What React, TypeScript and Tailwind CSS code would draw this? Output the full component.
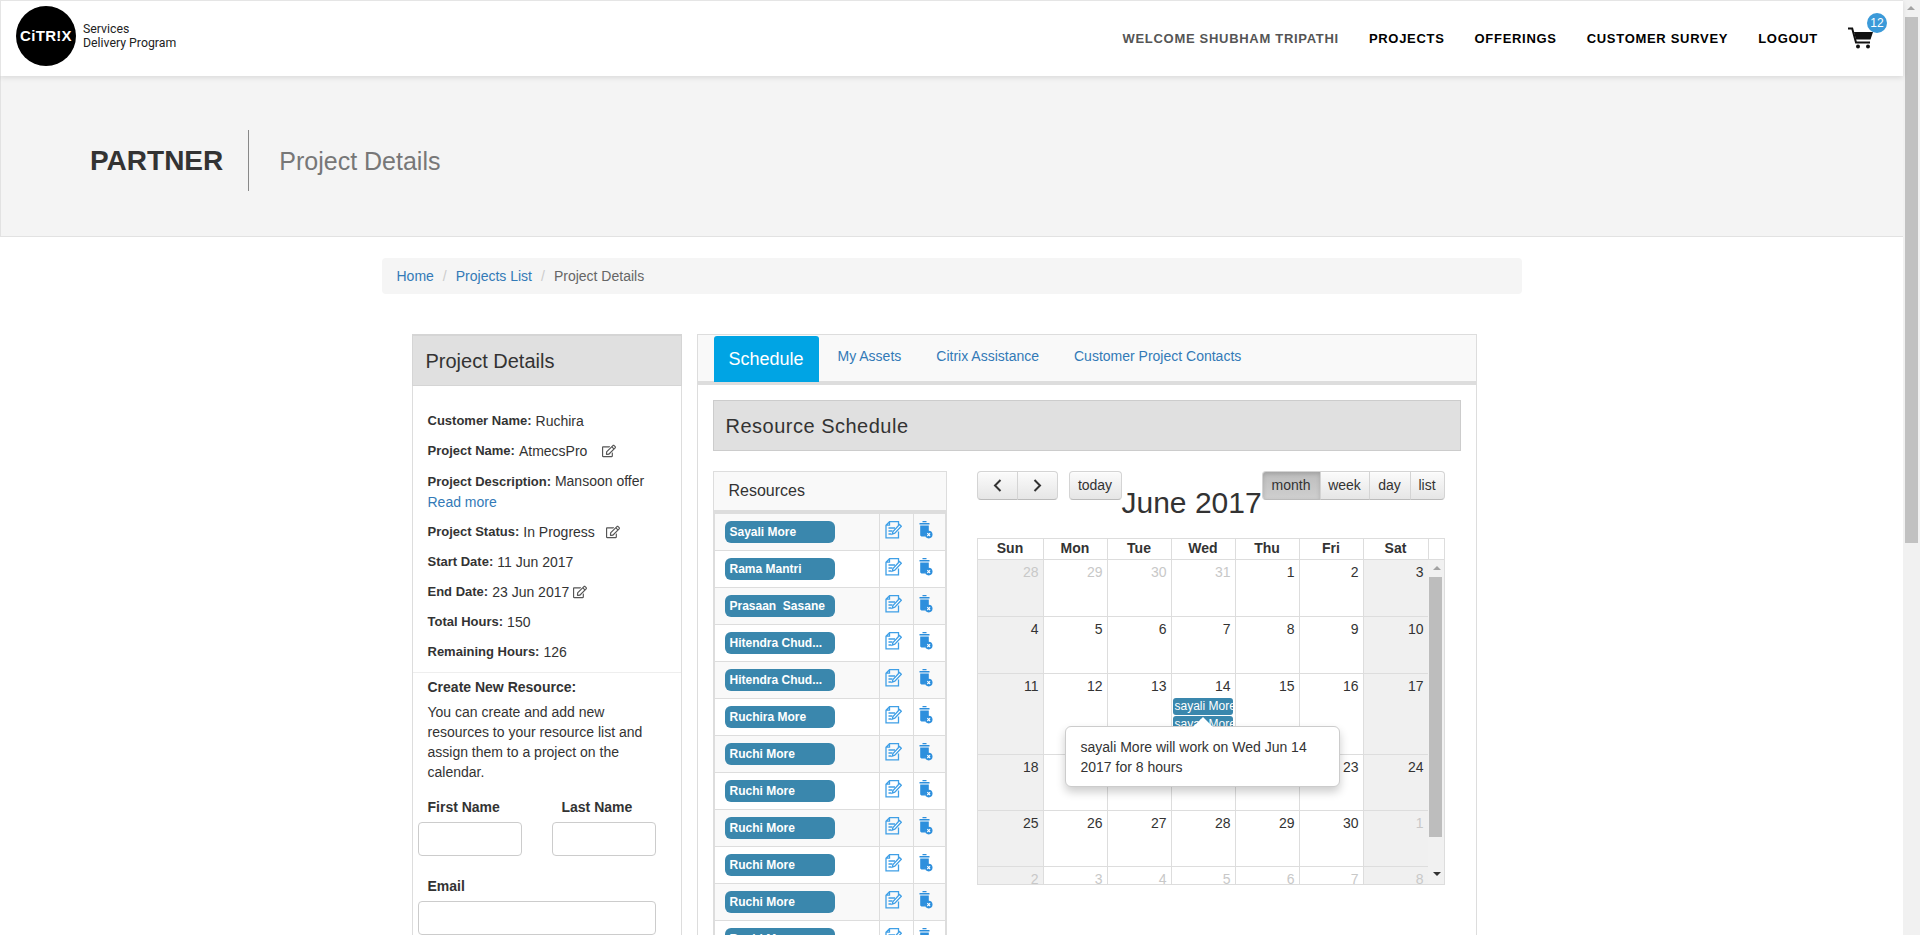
import React from 'react';
import { FaRegEdit } from 'react-icons/fa';

const RESOURCES = [
  'Sayali More',
  'Rama Mantri',
  'Prasaan  Sasane',
  'Hitendra Chud...',
  'Hitendra Chud...',
  'Ruchira More',
  'Ruchi More',
  'Ruchi More',
  'Ruchi More',
  'Ruchi More',
  'Ruchi More',
  'Ruchi More',
];

const WEEK_DAYS = ['Sun', 'Mon', 'Tue', 'Wed', 'Thu', 'Fri', 'Sat'];

const WEEKS = [
  { height: 'h-[57px]', days: [[28, 1], [29, 1], [30, 1], [31, 1], [1, 0], [2, 0], [3, 0]] },
  { height: 'h-[57px]', days: [[4, 0], [5, 0], [6, 0], [7, 0], [8, 0], [9, 0], [10, 0]] },
  { height: 'h-[81px]', days: [[11, 0], [12, 0], [13, 0], [14, 0], [15, 0], [16, 0], [17, 0]] },
  { height: 'h-[56px]', days: [[18, 0], [19, 0], [20, 0], [21, 0], [22, 0], [23, 0], [24, 0]] },
  { height: 'h-[56px]', days: [[25, 0], [26, 0], [27, 0], [28, 0], [29, 0], [30, 0], [1, 1]] },
  { height: 'h-[56px]', days: [[2, 1], [3, 1], [4, 1], [5, 1], [6, 1], [7, 1], [8, 1]] },
];

const NoteIcon = () => (
  <svg width="17" height="18" viewBox="0 0 17 18" fill="none" stroke="#3f9fe6" strokeWidth="1.3">
    <path d="M4.5 .7H13.5V4.5M13.5 10.5V16.8H1V4.2L4.5 .7V4.2H1" />
    <path d="M3.5 7H10M3.5 10H7.5M3.5 13H6" />
    <path d="M7 13.2L8 10.5L14.5 3.5L16.3 5.2L9.8 12.2Z" fill="#fff" />
  </svg>
);

const TrashIcon = () => (
  <svg width="14" height="18" viewBox="0 0 14 18">
    <path d="M3.5 1.2H7.5V0H3.5ZM.5 2H10.5V3.6H.5ZM1.2 4.5H9.8V10.5A4 4 0 0 0 6 15.5H2.4L1.2 14.5Z" fill="#2d8fdd" />
    <circle cx="9.7" cy="13.6" r="3.8" fill="#2d8fdd" />
    <path d="M8.3 12.2L11.1 15M11.1 12.2L8.3 15" stroke="#fff" strokeWidth="1.1" />
  </svg>
);

const Cart = () => (
  <svg width="26" height="22" viewBox="0 0 26 22">
    <path d="M0 1.5H4.2L8 15.5H22" fill="none" stroke="#111" strokeWidth="2" />
    <path d="M6 5H25L22.5 12.5H8Z" fill="#111" />
    <circle cx="10" cy="19.5" r="2" fill="#111" />
    <circle cx="20" cy="19.5" r="2" fill="#111" />
  </svg>
);

const Chevron = ({ left }: { left?: boolean }) => (
  <svg width="9" height="13" viewBox="0 0 9 13" fill="none" stroke="#333" strokeWidth="2">
    <path d={left ? 'M7.5 1L2 6.5L7.5 12' : 'M1.5 1L7 6.5L1.5 12'} />
  </svg>
);

const Detail = ({ label, value, icon }: { label: string; value: string; icon?: string }) => (
  <p className="mb-[10px] h-[20px] leading-[20px] whitespace-nowrap flex items-center">
    <b className="text-[13px] mr-[4px]">{label}</b> {value}
    {icon && <FaRegEdit className={`${icon} text-[14px] text-[#555]`} />}
  </p>
);

const btn = 'h-[29px] flex items-center justify-center bg-linear-to-b from-[#fbfbfb] to-[#e6e6e6] border border-[#d4d4d4] border-b-[#bbb] text-[14px] text-[#333] shadow-[inset_0_1px_0_rgba(255,255,255,0.6)]';

export default function App() {
  return (
    <div className="flex h-[935px] overflow-hidden bg-white text-[14px] text-[#333] font-['Liberation_Sans',Arial,sans-serif]">
      <div className="w-[1903px] shrink-0">
        {/* Top nav */}
        <header className="relative z-10 h-[76px] flex items-start justify-between bg-white border-t border-l border-[#e5e5e5] pl-[15px] pr-[30px] shadow-[0_2px_5px_rgba(0,0,0,0.1)]">
          <div className="flex items-center gap-[7px] pt-[5px]">
            <div aria-label="Citrix" className="w-[60px] h-[60px] rounded-full bg-black flex items-center justify-center text-white font-bold text-[15px] tracking-[0.3px]">
              CiTR!X
            </div>
            <div className="font-['Roboto',sans-serif] text-[12.3px] leading-[14px] text-[#222] -mt-[1px]">
              <div>Services</div>
              <div>Delivery Program</div>
            </div>
          </div>
          <nav className="h-[75px] flex items-center gap-[30px] text-[13px] font-bold tracking-[0.7px] text-black">
            <span className="text-[#555]">WELCOME SHUBHAM TRIPATHI</span>
            <span>PROJECTS</span>
            <span>OFFERINGS</span>
            <span>CUSTOMER SURVEY</span>
            <span>LOGOUT</span>
            <div className="relative w-[25px] h-[22px] -mt-[1px]">
              <Cart />
              <span className="absolute -top-[14px] left-[19px] w-[20px] h-[20px] rounded-full bg-[#3b9ad9] text-white text-[12px] font-normal tracking-normal flex items-center justify-center">
                12
              </span>
            </div>
          </nav>
        </header>

        {/* Title band */}
        <div className="h-[161px] bg-[#f4f4f4] border-l border-b border-[#e2e2e2] pl-[89px] pt-[9px] flex items-center">
          <div className="text-[28px] font-bold text-[#333] leading-none">PARTNER</div>
          <div className="w-px h-[61px] bg-[#888] ml-[25px] mr-[30px]" />
          <div className="text-[25px] text-[#777] leading-none pt-[2px]">Project Details</div>
        </div>

        <div className="w-[1140px] mx-auto pt-[21px]">
          <div className="h-[36px] px-[15px] flex items-center gap-[9px] rounded bg-[#f5f5f5]">
            <span className="text-[#337ab7]">Home</span>
            <span className="text-[#ccc]">/</span>
            <span className="text-[#337ab7]">Projects List</span>
            <span className="text-[#ccc]">/</span>
            <span className="text-[#666]">Project Details</span>
          </div>

          <div className="flex gap-[15px] pl-[30px] pt-[40px]">
            {/* Project details column */}
            <aside className="w-[270px] shrink-0 border-x border-[#ddd] h-[640px]">
              <div className="h-[52px] -mx-px flex items-center pl-[13px] bg-[#e0e0e0] border border-t-2 border-[#d5d5d5] text-[20px]">
                Project Details
              </div>
              <div className="pt-[25px] pl-[15px] pr-[10px]">
                <Detail label="Customer Name:" value="Ruchira" />
                <Detail label="Project Name:" value="AtmecsPro" icon="ml-[15px]" />
                <p className="mb-[10px] leading-[20px]">
                  <b className="text-[13px]">Project Description:</b> Mansoon offer
                  <br />
                  <span className="text-[#337ab7]">Read more</span>
                </p>
                <Detail label="Project Status:" value="In Progress" icon="ml-[11px]" />
                <Detail label="Start Date:" value="11 Jun 2017" />
                <Detail label="End Date:" value="23 Jun 2017" icon="ml-[4px]" />
                <Detail label="Total Hours:" value="150" />
                <Detail label="Remaining Hours:" value="126" />
              </div>
              <div className="border-t border-[#eee] mt-[1px] pl-[15px] pr-[15px] pt-[4px]">
                <h4 className="font-bold leading-[20px]">Create New Resource:</h4>
                <p className="mt-[5px] leading-[20px]">
                  You can create and add new resources to your resource list and assign them to a project on the calendar.
                </p>
                <div className="mt-[15px] flex gap-[30px] -ml-[10px]">
                  <div className="w-[104px]">
                    <label className="block pl-[10px] font-bold leading-[20px]">First Name</label>
                    <div className="mt-[5px] h-[34px] rounded border border-[#ccc] bg-white" />
                  </div>
                  <div className="w-[104px]">
                    <label className="block pl-[10px] font-bold leading-[20px]">Last Name</label>
                    <div className="mt-[5px] h-[34px] rounded border border-[#ccc] bg-white" />
                  </div>
                </div>
                <div className="mt-[20px] -ml-[10px] w-[238px]">
                  <label className="block pl-[10px] font-bold leading-[20px]">Email</label>
                  <div className="mt-[5px] h-[34px] rounded border border-[#ccc] bg-white" />
                </div>
              </div>
            </aside>

            {/* Tabs column */}
            <section className="w-[780px] shrink-0 border-x border-t border-[#ddd] h-[640px]">
              <div className="h-[50px] bg-[#f9f9f9] border-b-4 border-[#ddd] flex items-start pl-[16px]">
                <div className="mt-px h-[46px] w-[105px] rounded-t-[3px] bg-[#00a4e4] text-white text-[18px] flex items-center justify-center">
                  Schedule
                </div>
                <div className="flex gap-[35px] ml-[19px] mt-[11px] text-[#337ab7] leading-[20px]">
                  <span>My Assets</span>
                  <span>Citrix Assistance</span>
                  <span>Customer Project Contacts</span>
                </div>
              </div>

              <div className="px-[15px] pt-[15px]">
                <div className="h-[51px] flex items-center pl-[12px] bg-[#e0e0e0] border border-[#ccc] text-[20px] tracking-[0.5px]">
                  Resource Schedule
                </div>

                <div className="flex gap-[30px] pt-[20px]">
                  {/* Resources table */}
                  <div className="w-[234px] shrink-0">
                    <div className="h-[39px] flex items-center pl-[15px] bg-[#f9f9f9] border border-[#ddd] border-b-0 text-[16px]">
                      Resources
                    </div>
                    <div className="border-x-2 border-t-4 border-[#ddd]">
                      {RESOURCES.map((name, i) => (
                        <div key={i} className={`h-[37px] flex border-b border-[#ddd] ${i % 2 === 0 ? 'bg-[#f9f9f9]' : 'bg-white'}`}>
                          <div className="w-[165px] pl-[10px] pt-[7px] border-r border-[#ddd]">
                            <div className="w-[110px] h-[22px] pl-[5px] rounded-[6px] bg-[#3a87ad] text-white text-[12px] font-bold leading-[22px] whitespace-pre">
                              {name}
                            </div>
                          </div>
                          <div className="w-[34px] pl-[5px] pt-[7px] border-r border-[#ddd]">
                            <NoteIcon />
                          </div>
                          <div className="pl-[5px] pt-[7px]">
                            <TrashIcon />
                          </div>
                        </div>
                      ))}
                    </div>
                  </div>

                  {/* Calendar */}
                  <div className="w-[468px] shrink-0">
                    <div className="h-[67px] flex items-start">
                      <div className="flex">
                        <div className={`${btn} w-[41px] rounded-l-[4px]`}><Chevron left /></div>
                        <div className={`${btn} w-[41px] -ml-px rounded-r-[4px]`}><Chevron /></div>
                        <div className={`${btn} w-[53px] ml-[11px] rounded-[4px]`}>today</div>
                      </div>
                      <div className="w-[140px] mt-[15px] text-[30px] leading-[33px] whitespace-nowrap">June 2017</div>
                      <div className="flex">
                        <div className={`${btn} w-[59px] rounded-l-[4px] from-[#bdbdbd]! to-[#cfcfcf]! shadow-[inset_0_2px_4px_rgba(0,0,0,0.15)]`}>month</div>
                        <div className={`${btn} w-[50px] -ml-px`}>week</div>
                        <div className={`${btn} w-[42px] -ml-px`}>day</div>
                        <div className={`${btn} w-[35px] -ml-px rounded-r-[4px]`}>list</div>
                      </div>
                    </div>

                    <div className="relative border border-[#ddd]">
                      <div className="h-[21px] flex border-b border-[#ddd]">
                        <div className="grid grid-cols-[66px_64px_64px_64px_64px_64px_65px] w-[451px]">
                          {WEEK_DAYS.map(d => (
                            <div key={d} className="border-r border-[#ddd] text-center font-bold leading-[19px]">{d}</div>
                          ))}
                        </div>
                      </div>
                      <div className="h-[324px] flex overflow-hidden">
                        <div className="w-[450px] shrink-0">
                          {WEEKS.map((week, w) => (
                            <div key={w} className={`${week.height} grid grid-cols-[66px_64px_64px_64px_64px_64px_64px] border-b border-[#ddd]`}>
                              {week.days.map(([day, other], i) => (
                                <div
                                  key={i}
                                  className={`pt-[2px] pr-[4px] text-right leading-[20px] ${i < 6 ? 'border-r border-[#ddd]' : ''} ${i === 0 || i === 6 ? 'bg-[#f0f0f0]' : ''} ${other ? 'text-[#c8c8c8]' : ''}`}
                                >
                                  {day}
                                  {w === 2 && i === 3 && (
                                    <div className="-mr-[2px] ml-[1px] mt-[2px] text-left text-white text-[12px] leading-[17px]">
                                      <div className="h-[17px] pl-[2px] rounded-[3px] bg-[#3a87ad] overflow-hidden whitespace-nowrap">sayali More</div>
                                      <div className="h-[17px] mt-px pl-[2px] rounded-[3px] bg-[#3a87ad] overflow-hidden whitespace-nowrap">sayali More</div>
                                    </div>
                                  )}
                                </div>
                              ))}
                            </div>
                          ))}
                        </div>
                        {/* Calendar scrollbar */}
                        <div className="relative flex-1 bg-[#f1f1f1]">
                          <div className="absolute top-[6px] left-[5px] w-0 h-0 border-x-[4px] border-b-[4px] border-x-transparent border-b-[#a3a3a3]" />
                          <div className="absolute top-[17px] left-[1px] w-[13px] h-[260px] bg-[#bdbdbd]" />
                          <div className="absolute top-[312px] left-[5px] w-0 h-0 border-x-[4px] border-t-[4px] border-x-transparent border-t-[#333]" />
                        </div>
                      </div>

                      {/* Tooltip */}
                      <div className="absolute z-20 left-[87px] top-[187px] w-[275px] h-[61px] px-[15px] py-[10px] rounded-[6px] bg-white border border-[#ccc] leading-[20px] shadow-[0_5px_10px_rgba(0,0,0,0.2)]">
                        sayali More will work on Wed Jun 14 2017 for 8 hours
                        <div className="absolute -top-[10px] left-[127px] w-0 h-0 border-x-[10px] border-b-[10px] border-x-transparent border-b-white" />
                      </div>
                    </div>
                  </div>
                </div>
              </div>
            </section>
          </div>
        </div>
      </div>

      {/* Page scrollbar */}
      <div className="relative flex-1 bg-[#f1f1f1]">
        <div className="absolute top-[6px] left-[4px] w-0 h-0 border-x-[4px] border-b-[4px] border-x-transparent border-b-[#a3a3a3]" />
        <div className="absolute top-[17px] left-[2px] w-[13px] h-[526px] bg-[#c1c1c1]" />
      </div>
    </div>
  );
}
